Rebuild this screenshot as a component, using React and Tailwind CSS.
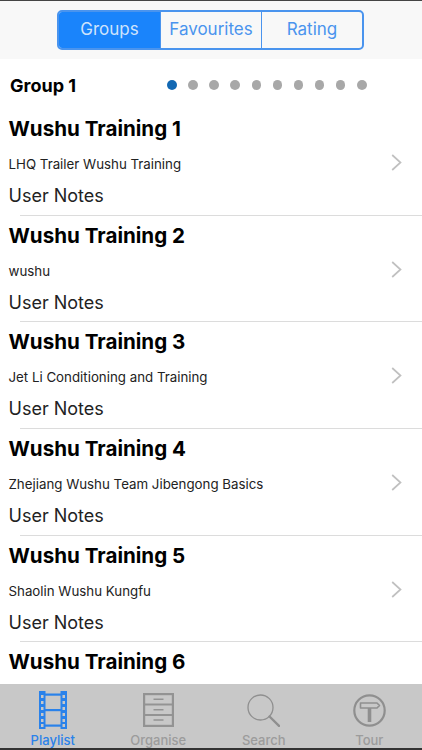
// App.jsx
import React from 'react';

const rows = [
  { title: 'Wushu Training 1', sub: 'LHQ Trailer Wushu Training' },
  { title: 'Wushu Training 2', sub: 'wushu' },
  { title: 'Wushu Training 3', sub: 'Jet Li Conditioning and Training' },
  { title: 'Wushu Training 4', sub: 'Zhejiang Wushu Team Jibengong Basics' },
  { title: 'Wushu Training 5', sub: 'Shaolin Wushu Kungfu' },
];

function FilmIcon() {
  return (
    <svg width="28" height="38" viewBox="0 0 28 38" fill="none">
      <rect x="0" y="0" width="6.5" height="38" fill="#2a82ea" />
      <rect x="21.5" y="0" width="6.5" height="38" fill="#2a82ea" />
      <rect x="6" y="2.5" width="16" height="2.2" fill="#2a82ea" />
      <rect x="6" y="18" width="16" height="2.2" fill="#2a82ea" />
      <rect x="6" y="33.5" width="16" height="2.2" fill="#2a82ea" />
      {[4, 10, 16, 22, 28, 33].map(y => (
        <React.Fragment key={y}>
          <rect x="2" y={y} width="2.5" height="3" fill="#c8c8c8" />
          <rect x="23.5" y={y} width="2.5" height="3" fill="#c8c8c8" />
        </React.Fragment>
      ))}
    </svg>
  );
}

function CabinetIcon() {
  return (
    <svg width="31" height="34" viewBox="0 0 31 34" fill="none" stroke="#939393" strokeWidth="2.2">
      <rect x="1.1" y="1.1" width="28.8" height="31.8" />
      <path d="M1.1 11.5H29.9M1.1 22H29.9" />
      <path d="M10.5 6.3H20.5M10.5 16.8H20.5M10.5 27H20.5" strokeWidth="1.4" />
    </svg>
  );
}

function SearchIcon() {
  return (
    <svg width="33" height="33" viewBox="0 0 33 33" fill="none" stroke="#8f8f8f">
      <circle cx="13.5" cy="13.5" r="12.5" strokeWidth="1.3" />
      <path d="M22.5 22.5L32 31.8" strokeWidth="2.4" strokeLinecap="round" />
    </svg>
  );
}

function TourIcon() {
  return (
    <svg width="33" height="33" viewBox="0 0 33 33" fill="none" stroke="#8f8f8f">
      <circle cx="16.5" cy="16.5" r="15.2" strokeWidth="2.2" />
      <path d="M7.5 9H24L26.5 11.5L24 14H7.5Z" strokeWidth="1.6" strokeLinejoin="round" />
      <path d="M16.5 14V28" strokeWidth="3.6" />
    </svg>
  );
}

function Tab({ icon, label, active }) {
  return (
    <div className="flex-1 flex flex-col items-center h-full pt-[7px]">
      <div className="h-[38px] flex items-center justify-center">{icon}</div>
      <span className={`mt-auto text-[13px] leading-[16px] font-medium ${active ? 'text-[#2a82ea]' : 'text-[#9c9c9c]'}`}>
        {label}
      </span>
    </div>
  );
}

export default function App() {
  return (
    <div className="w-[422px] h-[750px] flex flex-col overflow-hidden bg-white font-['Inter',sans-serif]">
      <div className="h-[1px] bg-[#444444]" />
      <div className="h-[58px] bg-[#f8f8f8] flex pl-[57px] pt-[9px]">
        <div className="w-[307px] h-[40px] flex rounded-[5px] border-2 border-[#4a94ee] overflow-hidden text-[17px] text-[#4a94ee]">
          <div className="w-[101px] flex items-center justify-center bg-[#1a84fb] text-[#cfe3fb]">Groups</div>
          <div className="w-[102px] flex items-center justify-center border-x-[1.5px] border-[#4a94ee]">Favourites</div>
          <div className="flex-1 flex items-center justify-center">Rating</div>
        </div>
      </div>

      <div className="h-[52px] flex items-center justify-between pl-[10px] pr-[55.5px]">
        <span className="text-[18px] font-bold text-black">Group 1</span>
        <div className="flex gap-[11.6px]">
          {Array.from({ length: 10 }, (_, i) => (
            <span key={i} className={`w-[9.5px] h-[9.5px] rounded-full ${i === 0 ? 'bg-[#1268b3]' : 'bg-[#a8a8a8]'}`} />
          ))}
        </div>
      </div>

      <div className="flex-1 overflow-hidden">
        {rows.map(row => (
          <div key={row.title} className="relative h-[106.7px] pl-[8.5px] pt-[3px]">
            <div className="text-[20.6px] leading-[30px] font-bold text-black">{row.title}</div>
            <div className="mt-[11px] text-[13.3px] leading-[18px] text-[#222222]">{row.sub}</div>
            <div className="mt-[10px] text-[18px] leading-[26px] text-[#222222]">User Notes</div>
            <svg width="11" height="17" viewBox="0 0 11 17" fill="none" stroke="#c0c0c0" strokeWidth="1.7" className="absolute right-[20px] top-[43px]">
              <path d="M1.2 1L9.5 8.5L1.2 16" />
            </svg>
            <div className="absolute left-[20px] right-0 bottom-[2px] h-[1px] bg-[#dcdcdc]" />
          </div>
        ))}
        <div className="pl-[8.5px] pt-[3px] text-[20.6px] leading-[30px] font-bold text-black">Wushu Training 6</div>
      </div>

      <div className="h-[64px] bg-[#c8c8c8] flex">
        <Tab icon={<FilmIcon />} label="Playlist" active />
        <Tab icon={<CabinetIcon />} label="Organise" />
        <Tab icon={<SearchIcon />} label="Search" />
        <Tab icon={<TourIcon />} label="Tour" />
      </div>
      <div className="h-[2px] bg-[#333333]" />
    </div>
  );
}
